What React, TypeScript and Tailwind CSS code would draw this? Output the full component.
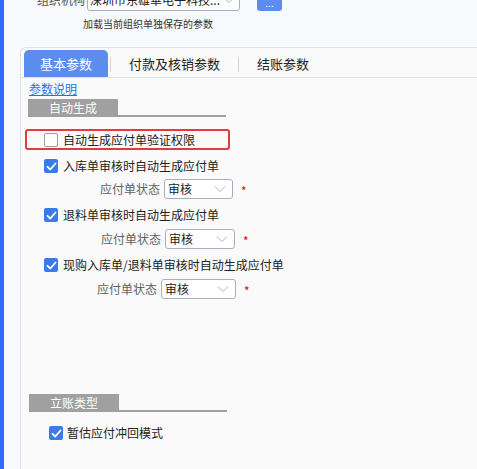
import React from "react";

const F = { fontFamily: '"Noto Sans CJK SC", "Noto Sans", sans-serif' };

function Check({ checked }: { checked: boolean }) {
  return checked ? (
    <span className="flex h-[14px] w-[14px] shrink-0 items-center justify-center rounded-[2px] bg-[#3a7bea]">
      <svg width="11" height="11" viewBox="0 0 11 11">
        <polyline points="1.5,5.8 4.3,8.5 9.5,2.5" fill="none" stroke="white" strokeWidth="1.8" strokeLinecap="round" strokeLinejoin="round" />
      </svg>
    </span>
  ) : (
    <span className="h-[14px] w-[14px] shrink-0 rounded-[2px] border border-[#a0a0a0] bg-white" />
  );
}

function Chevron() {
  return (
    <svg width="12" height="8" viewBox="0 0 12 8">
      <polyline points="1,1.5 6,6.5 11,1.5" fill="none" stroke="#a9b0bf" strokeWidth="1" />
    </svg>
  );
}

function SelectRow({ labelW, selW }: { labelW: number; selW: number }) {
  return (
    <div className="flex h-[20px] items-center">
      <div className="text-right text-[12px] text-[#606266]" style={{ width: labelW }}>应付单状态</div>
      <div className="ml-[4px] flex h-[20px] items-center justify-between rounded-[3px] border border-[#a8b0c0] bg-white pl-[3px] pr-[6px] text-[12px] text-[#222]" style={{ width: selW }}>
        <span>审核</span>
        <Chevron />
      </div>
      <span className="ml-[8px] mt-[3px] text-[12px] text-[#e00]">*</span>
    </div>
  );
}

function Section({ title }: { title: string }) {
  return (
    <div className="relative h-[18px] w-[198px]">
      <div className="flex h-[17px] w-[90px] items-center justify-center bg-[#a0a0a0] text-[12px] text-white">{title}</div>
      <div className="absolute bottom-0 left-0 h-[2px] w-[198px] bg-[#a0a0a0]" />
    </div>
  );
}

export default function App() {
  return (
    <div className="flex h-[469px] w-[477px] overflow-hidden bg-[#f7f9fc]" style={F}>
      <div className="w-[4px] shrink-0 bg-[#2d6df6]" />
      <div className="flex min-w-0 flex-1 flex-col pl-[16px]">
        <div className="-mt-[11px] flex h-[22px] items-center">
          <div className="w-[65px] text-right text-[12px] text-[#555]">组织机构</div>
          <div className="ml-[2px] flex h-[22px] w-[153px] items-center justify-between rounded-[3px] border border-[#a8b0c8] bg-white pl-[2px] pr-[4px] text-[12px] text-[#222]">
            <span className="whitespace-nowrap">深圳市东雄華电子科技...</span>
            <Chevron />
          </div>
          <div className="ml-[17px] flex h-[22px] w-[25px] items-end justify-center rounded-[3px] bg-[#5b8def] pb-[5px] text-[10px] leading-[6px] text-white">...</div>
        </div>
        <div className="mt-[6px] h-[14px] pl-[63px] text-[10px] leading-[14px] text-[#333]">加载当前组织单独保存的参数</div>
        <div className="mt-[16px] flex flex-1 flex-col rounded-tl-[6px] border-l border-t border-[#dfe2ea] bg-[#fafafa]">
          <div className="flex h-[30px] items-end border-b border-[#e2e4ea]">
            <div className="ml-[3px] flex h-[27px] w-[84px] items-center justify-center rounded-t-[5px] bg-[#5b8def] text-[13px] text-white">基本参数</div>
            <div className="mb-[5px] ml-[2px] h-[15px] w-px bg-[#cfd3dc]" />
            <div className="flex h-[27px] w-[127px] items-center justify-center text-[13px] text-[#222]">付款及核销参数</div>
            <div className="mb-[5px] h-[15px] w-px bg-[#cfd3dc]" />
            <div className="flex h-[27px] w-[88px] items-center justify-center text-[13px] text-[#222]">结账参数</div>
          </div>
          <div className="flex flex-col">
            <div className="mt-[3px] h-[16px] pl-[8px] text-[12px] leading-[16px]">
              <span className="text-[#1677e6] underline">参数说明</span>
            </div>
            <div className="ml-[7px] mt-[2px]"><Section title="自动生成" /></div>
            <div className="ml-[4px] mt-[12px] flex h-[21px] w-[205px] items-center rounded-[3px] border-2 border-[#e53a35] pl-[17px]">
              <Check checked={false} />
              <span className="ml-[5px] text-[12px] text-[#222]">自动生成应付单验证权限</span>
            </div>
            <div className="mt-[6px] flex h-[20px] items-center pl-[23px]">
              <Check checked />
              <span className="ml-[5px] text-[12px] text-[#222]">入库单审核时自动生成应付单</span>
            </div>
            <div className="mt-[3px]"><SelectRow labelW={139} selW={69} /></div>
            <div className="mt-[6px] flex h-[20px] items-center pl-[23px]">
              <Check checked />
              <span className="ml-[5px] text-[12px] text-[#222]">退料单审核时自动生成应付单</span>
            </div>
            <div className="mt-[4px]"><SelectRow labelW={140} selW={70} /></div>
            <div className="mt-[6px] flex h-[20px] items-center pl-[23px]">
              <Check checked />
              <span className="ml-[5px] text-[12px] text-[#222]">现购入库单/退料单审核时自动生成应付单</span>
            </div>
            <div className="mt-[4px]"><SelectRow labelW={136} selW={75} /></div>
            <div className="ml-[8px] mt-[95px]"><Section title="立账类型" /></div>
            <div className="mt-[11px] flex h-[20px] items-center pl-[28px]">
              <Check checked />
              <span className="ml-[4px] text-[12px] text-[#222]">暂估应付冲回模式</span>
            </div>
          </div>
        </div>
      </div>
    </div>
  );
}
